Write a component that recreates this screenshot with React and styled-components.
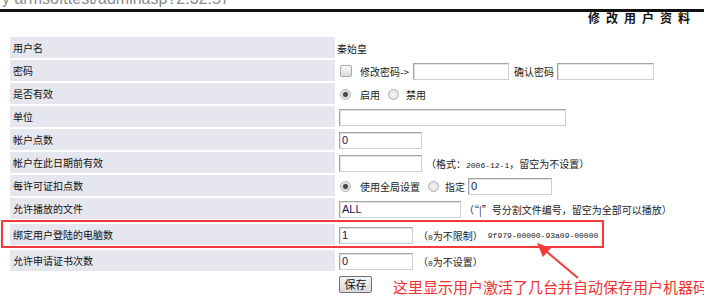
import React from 'react'
import styled, {createGlobalStyle} from 'styled-components'

const GlobalStyle = createGlobalStyle`
    body{
        margin:0;
        background:#fff;
        font-family:"Noto Sans CJK SC","Liberation Sans",sans-serif;
    }
`;

function App() {
    return (
        <Page>
            <GlobalStyle/>
            <UrlBar>
                <span>y armsofttest/adminasp?2.32.57</span>
            </UrlBar>
            <Rule/>
            <Header>
                <Title>修改用户资料</Title>
            </Header>
            <Form>
                <Row>
                    <Label>用户名</Label>
                    <Value><Text>秦始皇</Text></Value>
                </Row>
                <Row>
                    <Label>密码</Label>
                    <Value>
                        <Check type="checkbox"/>
                        <Text $ml={8}>修改密码-&gt;</Text>
                        <Field $w={96} $ml={4}/>
                        <Text $ml={5}>确认密码</Text>
                        <Field $w={97} $ml={3}/>
                    </Value>
                </Row>
                <Row>
                    <Label>是否有效</Label>
                    <Value>
                        <Radio type="radio" name="valid" defaultChecked/>
                        <Text $ml={9}>启用</Text>
                        <Radio type="radio" name="valid" $ml={8}/>
                        <Text $ml={7}>禁用</Text>
                    </Value>
                </Row>
                <Row>
                    <Label>单位</Label>
                    <Value><Field $w={227} $ml={2}/></Value>
                </Row>
                <Row>
                    <Label>帐户点数</Label>
                    <Value><Field $w={83} $ml={2} defaultValue="0"/></Value>
                </Row>
                <Row>
                    <Label>帐户在此日期前有效</Label>
                    <Value>
                        <Field $w={83} $ml={2}/>
                        <Text $ml={4}>（格式：<Small>2006-12-1</Small>，留空为不设置）</Text>
                    </Value>
                </Row>
                <Row>
                    <Label>每许可证扣点数</Label>
                    <Value>
                        <Radio type="radio" name="points" defaultChecked/>
                        <Text $ml={9}>使用全局设置</Text>
                        <Radio type="radio" name="points" $ml={8}/>
                        <Text $ml={6}>指定</Text>
                        <Field $w={84} $ml={3} defaultValue="0"/>
                    </Value>
                </Row>
                <Row>
                    <Label>允许播放的文件</Label>
                    <Value>
                        <Field $w={122} $ml={2} defaultValue="ALL"/>
                        <Text $ml={3}>（“|”号分割文件编号，留空为全部可以播放）</Text>
                    </Value>
                </Row>
                <Row $gap={5}>
                    <Label>绑定用户登陆的电脑数</Label>
                    <Value>
                        <Field $w={74} $ml={2} defaultValue="1"/>
                        <Text $ml={5}>（<Small>0</Small>为不限制）</Text>
                        <Code $ml={5}>9f979-00000-93a09-00000</Code>
                    </Value>
                </Row>
                <Row $gap={5}>
                    <Label>允许申请证书次数</Label>
                    <Value>
                        <Field $w={74} $ml={2} defaultValue="0"/>
                        <Text $ml={5}>（<Small>0</Small>为不设置）</Text>
                    </Value>
                </Row>
                <ButtonRow>
                    <span/>
                    <Actions>
                        <SaveButton>保存</SaveButton>
                        <Note>这里显示用户激活了几台并自动保存用户机器码</Note>
                    </Actions>
                </ButtonRow>
            </Form>

            <Highlight/>
            <Arrow viewBox="0 0 704 308">
                <line x1="578" y1="278" x2="547" y2="252" stroke="#f23a3a" strokeWidth="2"/>
                <polygon points="537,243 551,248 543,257" fill="#f23a3a"/>
            </Arrow>
        </Page>
    )
}

const Page = styled.div`
    position:relative;
    width:704px;
    height:308px;
    overflow:hidden;
`;
const UrlBar = styled.div`
    height:9px;
    overflow:hidden;
    padding-left:2px;
    color:#8a8a8a;
    font-family:"Liberation Sans",sans-serif;
    font-size:16px;
    line-height:16px;

    span{
        display:block;
        transform:translateY(-9px);
    }
`;
const Rule = styled.div`
    height:3px;
    background:#111;
`;
const Header = styled.div`
    height:25px;
    display:flex;
    justify-content:flex-end;
    padding-right:8px;
`;
const Title = styled.div`
    font-size:12px;
    line-height:12px;
    font-weight:bold;
    letter-spacing:6px;
    color:#111;
`;
const Form = styled.div`
    padding-left:10px;
`;
const Row = styled.div`
    display:grid;
    grid-template-columns:325px 1fr;
    column-gap:2px;
    height:21px;
    margin-top:${p => p.$gap || 2}px;
    &:first-child{
        margin-top:0;
    }
`;
const Label = styled.div`
    background:#e6e6ee;
    display:flex;
    align-items:center;
    padding-left:3px;
    font-size:10px;
    color:#111;
`;
const Value = styled.div`
    display:flex;
    align-items:center;
    padding-top:1px;
    white-space:nowrap;
`;
const Text = styled.span`
    font-size:10px;
    color:#1a1a1a;
    margin-left:${p => p.$ml || 0}px;
`;
const Small = styled.span`
    font-family:"Liberation Mono",monospace;
    font-size:8px;
`;
const Code = styled.span`
    font-family:"Liberation Mono",monospace;
    font-size:8px;
    color:#1a1a1a;
    margin-left:${p => p.$ml || 0}px;
`;
const Field = styled.input`
    box-sizing:border-box;
    width:${p => p.$w}px;
    height:17px;
    margin:0 0 0 ${p => p.$ml || 0}px;
    padding:0 2px;
    border:1px solid #a4a4a4;
    border-right-color:#cfcfcf;
    border-bottom-color:#cfcfcf;
    box-shadow:inset 1px 1px 0 #e2e2e2;
    font-family:"Liberation Sans",sans-serif;
    font-size:11px;
    color:#14145a;
    background:#fff;
    outline:none;
`;
const Check = styled.input`
    appearance:none;
    box-sizing:border-box;
    width:12px;
    height:12px;
    margin:0 0 0 3px;
    border:1px solid #a8a8a8;
    border-radius:2px;
    background:linear-gradient(#fafafa,#dcdcdc);
`;
const Radio = styled.input`
    appearance:none;
    box-sizing:border-box;
    width:11px;
    height:11px;
    margin:0 0 0 ${p => p.$ml || 3}px;
    border:1px solid #b0b0b0;
    border-radius:50%;
    background:radial-gradient(circle,#f6f6f6 0,#dcdcdc 100%);
    &:checked{
        background:radial-gradient(circle,#4a4a4a 0 2px,#9a9a9a 2.6px,#e4e4e4 3.2px,#f4f4f4 100%);
    }
`;
const ButtonRow = styled.div`
    display:grid;
    grid-template-columns:325px 1fr;
    column-gap:2px;
    margin-top:5px;
`;
const Actions = styled.div`
    display:flex;
    align-items:flex-start;
`;
const SaveButton = styled.button`
    box-sizing:border-box;
    width:33px;
    height:17px;
    margin-left:2px;
    padding:0;
    border:1px solid #707070;
    border-radius:2px;
    background:linear-gradient(#f4f4f4,#dadada);
    font-family:"Noto Sans CJK SC",sans-serif;
    font-size:11px;
    line-height:15px;
    color:#111;
`;
const Note = styled.span`
    margin:3px 0 0 21px;
    font-size:15px;
    line-height:16px;
    color:#f23030;
    white-space:nowrap;
`;
const Highlight = styled.div`
    position:absolute;
    left:1px;
    top:220px;
    width:603px;
    height:28px;
    box-sizing:border-box;
    border:2px solid #f23a3a;
    pointer-events:none;
`;
const Arrow = styled.svg`
    position:absolute;
    left:0;
    top:0;
    width:704px;
    height:308px;
    pointer-events:none;
`;

export default App;
